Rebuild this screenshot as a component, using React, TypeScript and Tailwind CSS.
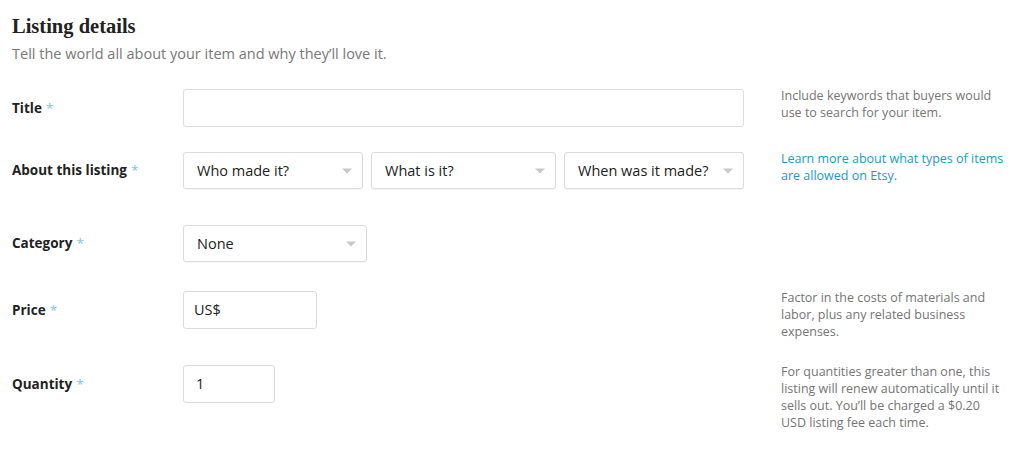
import React from 'react';

const sans = { fontFamily: '"Open Sans", "Liberation Sans", Arial, sans-serif' };

const Caret = () => (
  <span className="absolute right-[10px] top-1/2 -translate-y-1/2 w-0 h-0 border-l-[5px] border-r-[5px] border-t-[5px] border-l-transparent border-r-transparent border-t-[#c8c8c8]" />
);

const Select = ({ label, className = '' }: { label: string; className?: string }) => (
  <div
    className={`relative h-[37px] flex items-center pl-[13px] bg-white border border-[#dcdcdc] rounded-[3px] shadow-[0_1px_1px_rgba(0,0,0,0.04)] text-[14.5px] text-[#222] ${className}`}
  >
    {label}
    <Caret />
  </div>
);

const Input = ({ value = '', className = '' }: { value?: string; className?: string }) => (
  <div
    className={`h-[38px] flex items-center pl-[10px] bg-white border border-[#dcdcdc] rounded-[3px] text-[14.5px] text-[#222] ${className}`}
  >
    {value}
  </div>
);

const Label = ({ children }: { children: React.ReactNode }) => (
  <div className="w-[171px] shrink-0 text-[13.5px] font-bold text-[#222]">
    {children}
    <span className="ml-[4px] font-normal text-[#7cc7de]">*</span>
  </div>
);

const Row = ({
  label,
  field,
  help,
  className = '',
  helpWidth = 'w-[222px]',
}: {
  label: string;
  field: React.ReactNode;
  help?: React.ReactNode;
  className?: string;
  helpWidth?: string;
}) => (
  <div className={`flex items-start ${className}`}>
    <div className="flex items-center w-[732px] shrink-0">
      <Label>{label}</Label>
      <div className="w-[561px]">{field}</div>
    </div>
    <div className={`ml-[37px] ${helpWidth} -mt-[2px] text-[12.5px] leading-[17px] text-[#757575]`}>{help}</div>
  </div>
);

export default function App() {
  return (
    <div className="w-[1024px] h-[449px] bg-white px-3 pt-[13px] overflow-hidden" style={sans}>
      <h1
        className="text-[20.5px] leading-[26px] font-bold text-[#222]"
        style={{ fontFamily: '"Liberation Serif", "DejaVu Serif", serif' }}
      >
        Listing details
      </h1>
      <p className="mt-[5px] text-[14.5px] leading-[19px] text-[#787878]">
        Tell the world all about your item and why they’ll love it.
      </p>

      <Row
        className="mt-[26px]"
        label="Title"
        field={<Input />}
        help={<>Include keywords that buyers would use to search for your item.</>}
      />
      <Row
        className="mt-[25px]"
        label="About this listing"
        helpWidth="w-[232px]"
        field={
          <div className="grid grid-cols-[180px_185px_180px] gap-2">
            <Select label="Who made it?" />
            <Select label="What is it?" />
            <Select label="When was it made?" />
          </div>
        }
        help={<span className="text-[#1a9bc2]">Learn more about what types of items are allowed on Etsy.</span>}
      />
      <Row className="mt-[36px]" label="Category" field={<Select label="None" className="w-[184px]" />} />
      <Row
        className="mt-[29px]"
        label="Price"
        field={<Input value="US$" className="w-[134px]" />}
        help={<>Factor in the costs of materials and labor, plus any related business expenses.</>}
      />
      <Row
        className="mt-[25px]"
        label="Quantity"
        field={<Input value="1" className="w-[92px] pl-[12px]" />}
        help={
          <>
            For quantities greater than one, this listing will renew automatically until it sells out. You’ll be
            charged a $0.20 USD listing fee each time.
          </>
        }
      />
    </div>
  );
}
